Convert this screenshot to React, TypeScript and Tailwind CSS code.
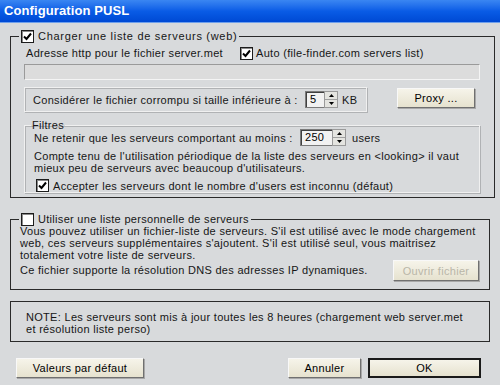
import React from 'react';

const font = { fontFamily: '"Liberation Sans", Arial, sans-serif' };

const Check = ({ checked }: { checked?: boolean }) => (
  <span className="inline-flex w-[13px] h-[13px] shrink-0 items-center justify-center bg-white border border-[#1c1c1c] shadow-[inset_1px_1px_0_#8a8a8a]">
    {checked && (
      <svg width="9" height="9" viewBox="0 0 9 9">
        <path d="M1 4.5 L3.5 7 L8 1.5" stroke="#000" strokeWidth="2" fill="none" />
      </svg>
    )}
  </span>
);

const Spinner = ({ value, w }: { value: string; w: string }) => (
  <span className="inline-flex h-[17px] items-stretch shrink-0">
    <span className={`${w} bg-[#f2f2f2] border border-[#7a7a7a] border-r-0 shadow-[inset_1px_1px_0_#404040] pl-[4px] leading-[15px] text-black`}>{value}</span>
    <span className="w-[14px] flex flex-col border border-[#9a9a9a] bg-[#e4e4e0]">
      <span className="flex-1 flex items-center justify-center border-b border-[#a0a0a0]">
        <svg width="5" height="3" viewBox="0 0 5 3"><path d="M0 3 L2.5 0 L5 3Z" fill="#000" /></svg>
      </span>
      <span className="flex-1 flex items-center justify-center">
        <svg width="5" height="3" viewBox="0 0 5 3"><path d="M0 0 L2.5 3 L5 0Z" fill="#000" /></svg>
      </span>
    </span>
  </span>
);

const Btn = ({ children, className = '', disabled, def }: { children: React.ReactNode; className?: string; disabled?: boolean; def?: boolean }) => (
  <button
    className={`h-[20px] shrink-0 flex items-center justify-center whitespace-nowrap bg-gradient-to-b from-[#f6f4ea] to-[#e6e2cf] ${
      def ? 'border-2 border-[#1a1a1a]' : 'border border-[#f8f8f8] border-r-[#707070] border-b-[#707070] shadow-[1px_1px_0_#a8a8a8]'
    } ${disabled ? 'text-[#b9b6a8]' : 'text-black'} ${className}`}
  >
    {children}
  </button>
);

export default function App() {
  return (
    <div className="w-[500px] h-[385px] bg-[#d8dadc] text-[11px] leading-[12px] tracking-[0.3px] whitespace-nowrap text-[#161616] overflow-hidden" style={font}>
      {/* Title bar */}
      <div className="h-[23px] bg-gradient-to-b from-[#3a86f2] via-[#0a5ce6] to-[#0049d4] flex items-center pl-[4px] border-b border-[#6fa0ec]">
        <span className="text-white font-bold text-[13px] tracking-[0.1px]">Configuration PUSL</span>
      </div>

      <div className="px-[10px] pt-[6px]">
        {/* Group 1 */}
        <fieldset className="border border-[#2a2a2a] pb-[4px]">
          <legend className="ml-[8px] px-[2px] flex items-center gap-[4px] h-[14px] tracking-[0.7px]">
            <Check checked />
            <span>Charger une liste de serveurs (web)</span>
          </legend>
          <div className="pl-[13px] pr-[14px]">
            <div className="flex items-center h-[14px] mt-[3px]">
              <span className="pl-[2px] w-[216px]">Adresse http pour le fichier server.met</span>
              <Check checked />
              <span className="ml-[3px]">Auto (file-finder.com servers list)</span>
            </div>
            <div className="mt-[4px] h-[16px] bg-[#dcdcdc] border border-[#9a9a9a] border-r-[#f4f4f4] border-b-[#f4f4f4]" />
            <div className="flex mt-[7px] items-start">
              <div className="w-[343px] h-[25px] border border-[#f0f0f0] shadow-[inset_1px_1px_0_#b0b2b4,1px_1px_0_#b0b2b4] flex items-center pl-[8px]">
                <span className="w-[272px]">Considérer le fichier corrompu si taille inférieure à :</span>
                <Spinner value="5" w="w-[19px]" />
                <span className="ml-[4px]">KB</span>
              </div>
              <Btn className="ml-[30px] mt-[1px] w-[78px]">Proxy ...</Btn>
            </div>
            {/* Filtres */}
            <fieldset className="mt-[7px] w-[456px] border border-[#f0f0f0] shadow-[inset_1px_1px_0_#b0b2b4,1px_1px_0_#b0b2b4] pb-0">
              <legend className="ml-[6px] px-[1px] h-[12px] leading-[12px]">Filtres</legend>
              <div className="pl-[9px]">
                <div className="flex items-center h-[17px] -mt-[2px]">
                  <span className="w-[266px]">Ne retenir que les serveurs comportant au moins :</span>
                  <Spinner value="250" w="w-[32px]" />
                  <span className="ml-[6px]">users</span>
                </div>
                <div className="mt-[4px]">
                  Compte tenu de l'utilisation périodique de la liste des serveurs en &lt;looking&gt; il vaut
                  <br />
                  mieux peu de serveurs avec beaucoup d'utilisateurs.
                </div>
                <div className="flex items-center gap-[4px] mt-[5px] ml-[2px]">
                  <Check checked />
                  <span>Accepter les serveurs dont le nombre d'users est inconnu (défaut)</span>
                </div>
              </div>
            </fieldset>
          </div>
        </fieldset>

        {/* Group 2 */}
        <fieldset className="mt-[14px] border border-[#2a2a2a] pb-[8px]">
          <legend className="ml-[8px] px-[2px] flex items-center gap-[4px] h-[14px]">
            <Check />
            <span>Utiliser une liste personnelle de serveurs</span>
          </legend>
          <div className="pl-[9px] pr-[10px]">
            <div className="-mt-[1px]">
              Vous pouvez utiliser un fichier-liste de serveurs. S'il est utilisé avec le mode chargement
              <br />
              web, ces serveurs supplémentaires s'ajoutent. S'il est utilisé seul, vous maitrisez
              <br />
              totalement votre liste de serveurs.
            </div>
            <div className="flex items-start">
              <span className="mt-[3px] flex-1">Ce fichier supporte la résolution DNS des adresses IP dynamiques.</span>
              <Btn disabled className="w-[86px] h-[21px] -mt-[1px]">Ouvrir fichier</Btn>
            </div>
          </div>
        </fieldset>

        {/* Note */}
        <div className="mt-[11px] h-[41px] border border-[#2a2a2a] pl-[15px] pt-[9px]">
          NOTE: Les serveurs sont mis à jour toutes les 8 heures (chargement web server.met
          <br />
          et résolution liste perso)
        </div>

        {/* Buttons */}
        <div className="flex mt-[16px] pl-[6px]">
          <Btn className="w-[128px]">Valeurs par défaut</Btn>
          <Btn className="ml-[144px] w-[73px]">Annuler</Btn>
          <Btn def className="ml-[7px] w-[113px]">OK</Btn>
        </div>
      </div>
    </div>
  );
}
